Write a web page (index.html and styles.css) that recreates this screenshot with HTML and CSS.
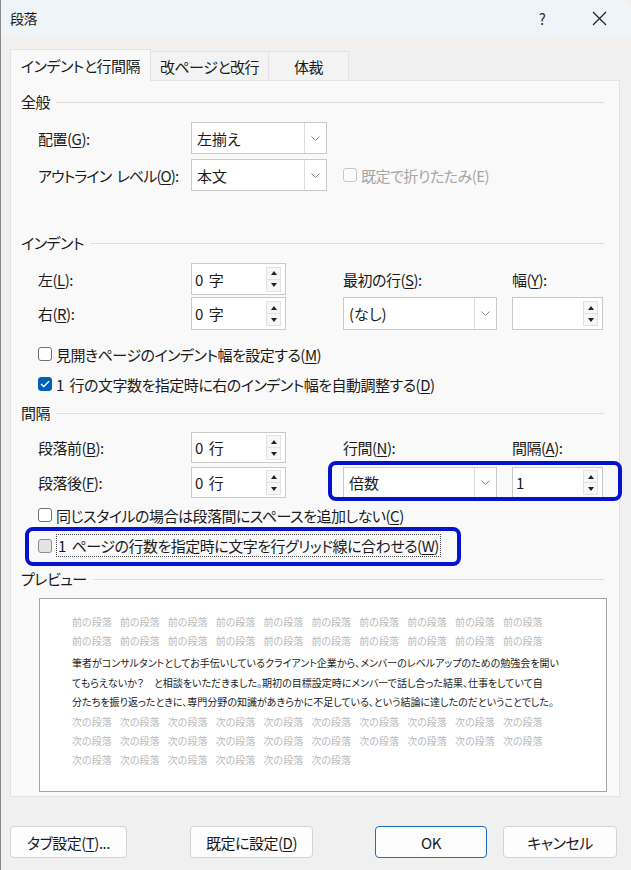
FILE: index.html
```html
<!DOCTYPE html>
<html lang="ja">
<head>
    <meta charset="UTF-8">
    <title>段落</title>
    <link rel="stylesheet" href="styles.css">
</head>
<body>
<div class="dialog">
    <div class="titlebar">
        <span class="title">段落</span>
        <span class="help">?</span>
        <span class="close">
            <svg width="15" height="15" viewBox="0 0 15 15"><path d="M1 1L14 14M14 1L1 14" stroke="#222" stroke-width="1.2" fill="none"/></svg>
        </span>
    </div>

    <div class="tabs">
        <div class="tab active">インデントと行間隔</div>
        <div class="tab t2">改ページと改行</div>
        <div class="tab t3">体裁</div>
    </div>

    <div class="panel">
        <div class="group-title"><span>全般</span><i></i></div>
        <div class="form general">
            <label>配置(<u>G</u>):</label>
            <div class="select w136"><span>左揃え</span><b><svg width="9" height="5" viewBox="0 0 9 5"><path d="M0.5 0.5L4.5 4.5L8.5 0.5" stroke="#888" fill="none"/></svg></b></div>
            <div></div><div></div>

            <label class="tight">アウトライン レベル(<u>O</u>):</label>
            <div class="select w136"><span>本文</span><b><svg width="9" height="5" viewBox="0 0 9 5"><path d="M0.5 0.5L4.5 4.5L8.5 0.5" stroke="#888" fill="none"/></svg></b></div>
            <div class="check disabled span2"><span class="cb"></span><span>既定で折りたたみ(E)</span></div>
        </div>

        <div class="group-title indent-title"><span>インデント</span><i></i></div>
        <div class="form indent">
            <label>左(<u>L</u>):</label>
            <div class="spin w95"><span>0 字</span><div class="arrows"><em class="up"></em><em class="down"></em></div></div>
            <label>最初の行(<u>S</u>):</label>
            <label>幅(<u>Y</u>):</label>

            <label>右(<u>R</u>):</label>
            <div class="spin w95"><span>0 字</span><div class="arrows"><em class="up"></em><em class="down"></em></div></div>
            <div class="select w154"><span>(なし)</span><b><svg width="9" height="5" viewBox="0 0 9 5"><path d="M0.5 0.5L4.5 4.5L8.5 0.5" stroke="#888" fill="none"/></svg></b></div>
            <div class="spin w91"><span></span><div class="arrows"><em class="up"></em><em class="down"></em></div></div>
        </div>
        <div class="checks first">
            <div class="check"><span class="cb"></span><span>見開きページのインデント幅を設定する(<u>M</u>)</span></div>
            <div class="check"><span class="cb checked"><svg width="10" height="8" viewBox="0 0 10 8"><path d="M1 4L3.8 6.6L9 1.2" stroke="#fff" stroke-width="1.4" fill="none"/></svg></span><span>1&nbsp; 行の文字数を指定時に右のインデント幅を自動調整する(<u>D</u>)</span></div>
        </div>

        <div class="group-title spacing-title"><span>間隔</span><i></i></div>
        <div class="form spacing">
            <label>段落前(<u>B</u>):</label>
            <div class="spin w95"><span>0 行</span><div class="arrows"><em class="up"></em><em class="down"></em></div></div>
            <label>行間(<u>N</u>):</label>
            <label>間隔(<u>A</u>):</label>

            <label>段落後(<u>F</u>):</label>
            <div class="spin w95"><span>0 行</span><div class="arrows"><em class="up"></em><em class="down"></em></div></div>
            <div class="select w154"><span>倍数</span><b><svg width="9" height="5" viewBox="0 0 9 5"><path d="M0.5 0.5L4.5 4.5L8.5 0.5" stroke="#888" fill="none"/></svg></b></div>
            <div class="spin w91"><span>1</span><div class="arrows"><em class="up"></em><em class="down"></em></div></div>
        </div>
        <div class="checks second">
            <div class="check"><span class="cb"></span><span>同じスタイルの場合は段落間にスペースを追加しない(<u>C</u>)</span></div>
            <div class="check"><span class="cb gray"></span><span class="focus">1&nbsp; ページの行数を指定時に文字を行グリッド線に合わせる(<u>W</u>)</span></div>
        </div>

        <div class="group-title preview-title"><span>プレビュー</span><i></i></div>
        <div class="preview">
            <p class="ghost">前の段落 前の段落 前の段落 前の段落 前の段落 前の段落 前の段落 前の段落 前の段落 前の段落</p>
            <p class="ghost">前の段落 前の段落 前の段落 前の段落 前の段落 前の段落 前の段落 前の段落 前の段落 前の段落</p>
            <div class="sample">
                <p>筆者がコンサルタントとしてお手伝いしているクライアント企業から、メンバーのレベルアップのための勉強会を開い</p>
                <p>てもらえないか？　と相談をいただきました。期初の目標設定時にメンバーで話し合った結果、仕事をしていて自</p>
                <p>分たちを振り返ったときに、専門分野の知識があきらかに不足している、という結論に達したのだということでした。</p>
            </div>
            <p class="ghost">次の段落 次の段落 次の段落 次の段落 次の段落 次の段落 次の段落 次の段落 次の段落 次の段落</p>
            <p class="ghost">次の段落 次の段落 次の段落 次の段落 次の段落 次の段落 次の段落 次の段落 次の段落 次の段落</p>
            <p class="ghost">次の段落 次の段落 次の段落 次の段落 次の段落 次の段落</p>
        </div>
    </div>

    <div class="buttons">
        <div class="btn b1">タブ設定(<u>T</u>)...</div>
        <div class="btn b2">既定に設定(<u>D</u>)</div>
        <div class="btn b3 default">OK</div>
        <div class="btn b4">キャンセル</div>
    </div>

    <div class="mark mark-line"></div>
    <div class="mark mark-grid"></div>
</div>
</body>
</html>
```

FILE: styles.css
```css
body {
    margin: 0;
    background: #f0f0f0;
    font-family: "Noto Sans CJK JP", "Noto Sans", sans-serif;
    font-feature-settings: "palt";
    font-size: 15px;
    letter-spacing: -0.5px;
    color: #1b1b1b;
}
.dialog {
    position: relative;
    width: 631px;
    height: 870px;
    box-sizing: border-box;
    border-left: 1px solid #8a8a8a;
    border-top-right-radius: 8px;
    background: #f0f0f0;
    overflow: hidden;
}
.titlebar {
    height: 36px;
    display: flex;
    align-items: center;
    background: #eef4f8;
    padding-left: 9px;
}
.title {
    flex: 1;
    font-size: 14px;
}
.help {
    width: 50px;
    text-align: center;
    font-size: 15px;
    color: #333;
}
.close {
    width: 64px;
    display: flex;
    justify-content: center;
}

/* tabs */
.tabs {
    display: flex;
    align-items: flex-end;
    margin: 13px 0 0 9px;
    height: 31px;
}
.tab {
    box-sizing: border-box;
    height: 29px;
    display: flex;
    align-items: center;
    justify-content: center;
    background: #f3f3f3;
    border: 1px solid #e3e3e3;
    border-bottom: none;
}
.tab.active {
    width: 141px;
    height: 32px;
    margin-bottom: -1px;
    background: #f9f9f9;
    position: relative;
    z-index: 1;
}
.tab.t2 { width: 118px; border-left: none; }
.tab.t3 { width: 80px; border-left: none; }

.panel {
    box-sizing: border-box;
    margin: 0 11px 0 9px;
    height: 717px;
    padding: 12px 15px 0 10px;
    background: #f9f9f9;
    border: 1px solid #e3e3e3;
}
.group-title {
    display: flex;
    align-items: center;
    height: 18px;
    line-height: 18px;
}
.group-title span { padding-right: 6px; }
.group-title i {
    flex: 1;
    height: 1px;
    background: #dedede;
}
.indent-title { margin-top: 43px; }
.spacing-title { margin-top: 5px; }
.preview-title { margin-top: 9px; }

.form {
    display: grid;
    grid-template-columns: 153px 152px 169px 91px;
    margin-left: 17px;
    align-items: center;
}
.form .tight { letter-spacing: -0.9px; word-spacing: 3px; }
.general {
    margin-top: 11px;
    grid-template-rows: 32px 32px;
    row-gap: 5px;
}
.indent {
    margin-top: 11px;
    grid-template-rows: 32px 33px;
    row-gap: 2px;
}
.spacing {
    margin-top: 10px;
    grid-template-rows: 31px 31px;
    row-gap: 4px;
}
u { text-decoration-thickness: 1px; text-underline-offset: 2px; }

.select, .spin {
    box-sizing: border-box;
    height: 100%;
    display: flex;
    align-items: center;
    background: #fff;
    border: 1px solid #c9c9c9;
    letter-spacing: 0;
}
.select span { flex: 1; padding-left: 5px; }
.select b {
    width: 21px;
    height: 100%;
    display: flex;
    align-items: center;
    justify-content: center;
    border-left: 1px solid #dcdcdc;
}
.spin span { flex: 1; padding-left: 3px; word-spacing: 2px; }
.arrows {
    width: 15px;
    margin-right: 4px;
    display: flex;
    flex-direction: column;
}
.arrows em {
    height: 11px;
    display: flex;
    align-items: center;
    justify-content: center;
    background: #f7f7f7;
    border: 1px solid #e2e2e2;
}
.arrows em + em { border-top: none; }
.arrows em::after {
    content: "";
    border-left: 3.5px solid transparent;
    border-right: 3.5px solid transparent;
}
.arrows .up::after { border-bottom: 4px solid #222; }
.arrows .down::after { border-top: 4px solid #222; }
.w136 { width: 136px; }
.w154 { width: 154px; }
.w95 { width: 95px; }
.w91 { width: 91px; }
.span2 { grid-column: span 2; }

.checks { margin-left: 17px; }
.checks.first { margin-top: 9px; }
.checks.second { margin-top: 2px; }
.check {
    display: flex;
    align-items: center;
    gap: 4px;
    height: 30px;
}
.second .check + .check { height: 31px; }
.cb {
    box-sizing: border-box;
    width: 14px;
    height: 14px;
    border: 1px solid #707070;
    border-radius: 3px;
    background: #fff;
    display: flex;
    align-items: center;
    justify-content: center;
}
.cb.checked { background: #005fb8; border-color: #005fb8; }
.cb.gray { background: #e4e4e4; border-color: #8d8d8d; }
.check.disabled { color: #a6a6a6; }
.check.disabled .cb { border-color: #c8c8c8; background: #fbfbfb; }
.focus { outline: 1px dotted #444; padding: 0 1px; margin-left: 1px; }

.preview {
    box-sizing: border-box;
    margin: 10px 0 0 18px;
    width: 568px;
    height: 194px;
    background: #fff;
    border: 1px solid #a5a5a5;
    padding: 13px 0 0 32px;
    font-size: 10px;
    line-height: 19px;
    letter-spacing: 0;
}
.preview p { margin: 0; white-space: nowrap; }
.ghost { color: #b9b9b9; word-spacing: 6px; }
.sample { margin: 3px 0 0; color: #1b1b1b; line-height: 19.5px; }

.buttons {
    display: flex;
    margin: 29px 0 0 9px;
}
.btn {
    box-sizing: border-box;
    height: 32px;
    display: flex;
    align-items: center;
    justify-content: center;
    background: #fdfdfd;
    border: 1px solid #d3d3d3;
    border-radius: 4px;
}
.b1 { width: 117px; }
.b2 { width: 123px; margin-left: 63px; }
.b3 { width: 112px; margin-left: 62px; }
.b4 { width: 114px; margin-left: 16px; }
.btn.default { border-color: #1d6fbd; }

/* annotation boxes drawn over the dialog */
.mark {
    position: absolute;
    box-sizing: border-box;
    border: 4px solid #0613cc;
    border-radius: 8px;
}
.mark-grid { left: 327px; top: 461px; width: 294px; height: 40px; }
.mark-line { left: 24px; top: 527px; width: 436px; height: 39px; }
```
